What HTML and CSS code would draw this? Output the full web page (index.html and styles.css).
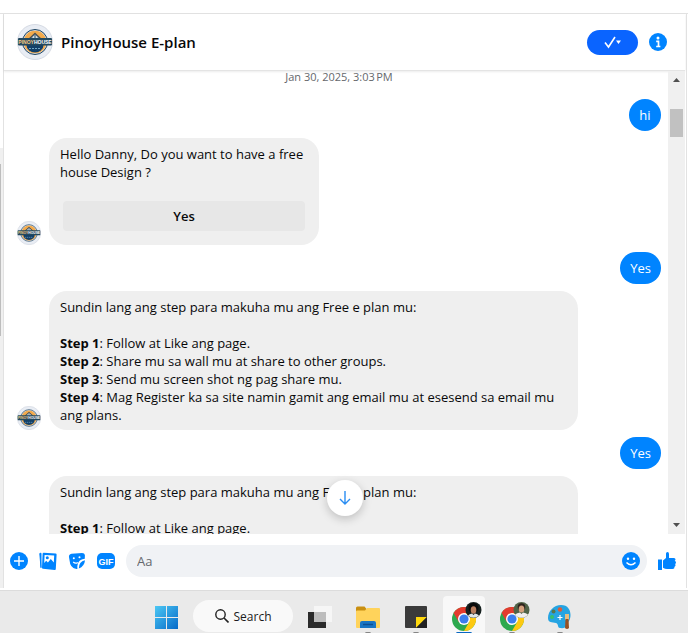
FILE: index.html
```html
<!DOCTYPE html>
<html lang="en">
<head>
    <meta charset="UTF-8">
    <meta name="viewport" content="width=device-width, initial-scale=1.0">
    <title>PinoyHouse E-plan</title>
    <link rel="stylesheet" href="styles.css">
</head>
<body>
    <!-- shared logo, used by every avatar -->
    <svg class="defs" width="0" height="0" aria-hidden="true">
        <symbol id="logo" viewBox="0 0 36 36">
            <circle cx="18" cy="18" r="17.5" fill="#e9edf4" stroke="#d5dae3"/>
            <circle cx="18" cy="18" r="12.5" fill="#d9dde2" stroke="#1d4462" stroke-width="1"/>
            <circle cx="18" cy="18" r="11.3" fill="#f3aa4b"/>
            <path d="M18 8.5 27 17v4H9v-4z" fill="#454f55"/>
            <path d="M18 10.5 24 16H12z" fill="#d9e3e8"/>
            <path d="M18 11v5M15 13.5v2.5M21 13.5v2.5" stroke="#294a60" stroke-width="1"/>
            <path d="M9.5 21h17a8.5 7.5 0 0 1-17 0z" fill="#123f68"/>
            <path d="M12 24.5h12" stroke="#6fa4c4" stroke-width="1" stroke-dasharray="2 1"/>
            <rect x="1" y="14" width="34" height="7.5" rx="1" fill="#23495f"/>
            <text x="18" y="19.7" text-anchor="middle" font-family="Liberation Sans" font-weight="700" font-size="5"><tspan fill="#f7c982">PINOY</tspan><tspan fill="#fff">HOUSE</tspan></text>
        </symbol>
        <symbol id="chrome" viewBox="0 0 24 24">
            <circle cx="12" cy="12" r="12" fill="#2da94f"/>
            <path d="M12 6h10.4A12 12 0 0 1 12 24l5.2-9z" fill="#fdc912"/>
            <path d="M12 6h10.4A12 12 0 0 0 1.6 6l5.2 9z" fill="#e33b2e"/>
            <circle cx="12" cy="12" r="6" fill="#fff"/>
            <circle cx="12" cy="12" r="4.6" fill="#3b7ded"/>
        </symbol>
    </svg>

    <div class="screen">
        <div class="side-edge"><div class="side-thumb"></div></div>

        <main class="chat">
            <header class="chat-header">
                <svg class="avatar-lg"><use href="#logo"/></svg>
                <h1>PinoyHouse E-plan</h1>
                <button class="done-btn" aria-label="Mark as done">
                    <svg width="20" height="14" viewBox="0 0 20 14"><path d="M2 7.5 5.5 12 12 2" fill="none" stroke="#fff" stroke-width="1.6"/><path d="M13 5.5h5L15.5 9z" fill="#fff"/></svg>
                </button>
                <button class="icon-btn" aria-label="Conversation information">
                    <svg width="18" height="18" viewBox="0 0 18 18"><circle cx="9" cy="9" r="9" fill="currentColor"/><circle cx="9" cy="5" r="1.5" fill="#fff"/><path d="M7.2 8.3h2.3v5M7.2 13.5h4.2" fill="none" stroke="#fff" stroke-width="1.7"/></svg>
                </button>
            </header>

            <section class="thread">
                <div class="messages">
                    <time class="date">Jan 30, 2025, 3:03&#8239;PM</time>

                    <div class="row sent"><p class="bubble">hi</p></div>

                    <div class="row received">
                        <svg class="avatar-sm"><use href="#logo"/></svg>
                        <div class="bubble card">
                            <p>Hello Danny, Do you want to have a free house Design ?</p>
                            <button class="reply-btn">Yes</button>
                        </div>
                    </div>

                    <div class="row sent"><p class="bubble">Yes</p></div>

                    <div class="row received">
                        <svg class="avatar-sm"><use href="#logo"/></svg>
                        <div class="bubble">
                            <p>Sundin lang ang step para makuha mu ang Free e plan mu:</p>
                            <br>
                            <p><b>Step 1</b>: Follow at Like ang page.</p>
                            <p><b>Step 2</b>: Share mu sa wall mu at share to other groups.</p>
                            <p><b>Step 3</b>: Send mu screen shot ng pag share mu.</p>
                            <p><b>Step 4</b>: Mag Register ka sa site namin gamit ang email mu at esesend sa email mu ang plans.</p>
                        </div>
                    </div>

                    <div class="row sent"><p class="bubble">Yes</p></div>

                    <div class="row received latest">
                        <div class="avatar-sm"></div>
                        <div class="bubble">
                            <p>Sundin lang ang step para makuha mu ang Free e plan mu:</p>
                            <br>
                            <p><b>Step 1</b>: Follow at Like ang page.</p>
                        </div>
                    </div>
                </div>

                <div class="scrollbar">
                    <svg width="7" height="4" viewBox="0 0 7 4"><path d="M0 4 3.5 0 7 4z" fill="#505050"/></svg>
                    <div class="scroll-thumb"></div>
                    <svg width="7" height="4" viewBox="0 0 7 4"><path d="M0 0 3.5 4 7 0z" fill="#505050"/></svg>
                </div>

                <button class="jump-btn" aria-label="Scroll to bottom">
                    <svg width="14" height="16" viewBox="0 0 14 16"><path d="M7 1v13M2 9l5 5 5-5" fill="none" stroke="#2a8df2" stroke-width="1.4"/></svg>
                </button>
            </section>

            <form class="composer">
                <button type="button" class="icon-btn" aria-label="More actions">
                    <svg width="18" height="18" viewBox="0 0 18 18"><circle cx="9" cy="9" r="9" fill="currentColor"/><path d="M9 4v10M4 9h10" stroke="#fff" stroke-width="1.4"/></svg>
                </button>
                <button type="button" class="icon-btn" aria-label="Attach a photo">
                    <svg width="18" height="18" viewBox="0 0 18 18"><path d="M.8 1.5 2 1.2v14.5z" fill="currentColor" stroke="currentColor" stroke-width="1"/><path d="M4.6.8 16.6 1.5q1 .1 1 1L16.8 17q-.1 1-1.1.9L4 16.8q-1-.1-1-1L3.6 1.7q.1-.9 1-.9z" fill="currentColor"/><path d="M5.6 3 15.2 3.6l-.4 7-3-3.6-2.9 3.5-1.7-1.7L5.2 11z" fill="#fff"/><circle cx="8.3" cy="5.8" r="1.5" fill="currentColor"/></svg>
                </button>
                <button type="button" class="icon-btn" aria-label="Choose a sticker">
                    <svg width="18" height="18" viewBox="0 0 18 18"><path d="M3.5 1.8 14 1q2.6 0 2.9 2l-.1 3.8q-4.9.4-6.7 4.2-1 2.4-.7 5.9-2.6.2-4-.8Q3 14.3 2.2 12L1 5.3Q.5 2.3 3.5 1.8z" fill="currentColor"/><path d="M17 8.2q-.5 6-6.2 8.3-.1-6.9 6.2-8.3z" fill="currentColor"/><circle cx="5.8" cy="6.2" r="1" fill="#fff"/><circle cx="11.5" cy="5.3" r="1" fill="#fff"/><path d="M5.2 10q2.3 2 4.6.4" fill="none" stroke="#fff" stroke-width="1.2"/></svg>
                </button>
                <button type="button" class="icon-btn" aria-label="Choose a GIF">
                    <svg width="18" height="18" viewBox="0 0 18 18"><rect y="1" width="18" height="16" rx="5" fill="currentColor"/><text x="9" y="12.5" text-anchor="middle" font-family="Liberation Sans" font-size="9" font-weight="700" fill="#fff">GIF</text></svg>
                </button>
                <div class="field">
                    <input type="text" placeholder="Aa" aria-label="Message">
                    <button type="button" class="icon-btn" aria-label="Choose an emoji">
                        <svg width="18" height="18" viewBox="0 0 18 18"><circle cx="9" cy="9" r="9" fill="currentColor"/><circle cx="6" cy="6.8" r="1.2" fill="#fff"/><circle cx="12" cy="6.8" r="1.2" fill="#fff"/><path d="M4.5 10.5q4.5 4.5 9 0" fill="none" stroke="#fff" stroke-width="1.5"/></svg>
                    </button>
                </div>
                <button type="button" class="icon-btn" aria-label="Send a like">
                    <svg width="18" height="18" viewBox="0 0 18 18"><path d="M0 7.5h4V18H0zM5 8.5 8 6V1.5Q8 0 9.5 0T11 2v4h5q1.5 0 1.500 1.500 0 1-.8 1.300 1.300.5 1.300 1.700T17 12q.8.5.5 1.500t-1 1.200q.3 2.300-2 2.300H9q-2 0-4-1.200z" fill="currentColor"/></svg>
                </button>
            </form>
        </main>
    </div>

    <footer class="taskbar">
        <button class="app" aria-label="Start">
            <svg width="23" height="23" viewBox="0 0 23 23"><defs><linearGradient id="win" gradientUnits="userSpaceOnUse" x1="0" y1="0" x2="23" y2="23"><stop offset="0" stop-color="#4cc8f4"/><stop offset="1" stop-color="#0669c8"/></linearGradient></defs><path d="M0 0h11v11H0zM12 0h11v11H12zM0 12h11v11H0zM12 12h11v11H12z" fill="url(#win)"/></svg>
        </button>
        <button class="search">
            <svg width="14" height="14" viewBox="0 0 14 14"><circle cx="5.5" cy="5.5" r="4.7" fill="none" stroke="#222" stroke-width="1.4"/><path d="m9 9 4.5 4.5" stroke="#222" stroke-width="1.6"/></svg>
            Search
        </button>
        <button class="app" aria-label="Task view">
            <svg width="24" height="24" viewBox="0 0 24 24"><rect y="7" width="18" height="16" fill="#2b2b2b"/><rect x="6" y="1" width="18" height="16" fill="#f6f6f6"/><rect x="6" y="7" width="12" height="10" fill="#bdbdbd"/></svg>
        </button>
        <button class="app open" aria-label="File Explorer">
            <svg width="24" height="24" viewBox="0 0 24 24"><path d="M0 3q0-1.500 1.500-1.500h7L10.500 4H24v8H0z" fill="#c98f10"/><path d="M1 5.500h8L11 3h12q1 0 1 1v18q0 1-1 1H1q-1 0-1-1V6.500q0-1 1-1z" fill="#ffd35b"/><path d="M4 23v-5q0-2 2-2h12q2 0 2 2v5z" fill="#1975c4"/><path d="M7 19.500h10" stroke="#0d4f91" stroke-width="1.5"/></svg>
        </button>
        <button class="app open" aria-label="Sticky Notes">
            <svg width="22" height="22" viewBox="0 0 22 22"><rect width="22" height="22" rx="1" fill="#3a3a3a"/><path d="M11 22V11h11z" fill="#ffd80c"/><path d="M11 22h11V11z" fill="#222"/></svg>
        </button>
        <button class="app open active" aria-label="Chrome, first profile">
            <svg width="36" height="30" viewBox="-6 0 36 30"><use href="#chrome" y="5" width="24" height="24"/><circle cx="21.5" cy="8" r="8" fill="#16201f"/><circle cx="21.5" cy="6" r="5" fill="#0a0a0a"/><ellipse cx="21.5" cy="8" rx="2.8" ry="3.8" fill="#b97f60"/><path d="M16 13.5q1.500-1.500 4-2l1.500 1.500 1.500-1.500q2.500.5 4 2a8 8 0 0 1-11 0z" fill="#dfe6e9"/></svg>
        </button>
        <button class="app open" aria-label="Chrome, second profile">
            <svg width="36" height="30" viewBox="-6 0 36 30"><use href="#chrome" y="5" width="24" height="24"/><circle cx="21.5" cy="8" r="8" fill="#506348"/><circle cx="21.5" cy="5" r="3.8" fill="#30241e"/><ellipse cx="21.5" cy="7" rx="2.8" ry="3.6" fill="#d5a17e"/><path d="M15 12.5q2-1.700 5-2l1.500 1.500 1.500-1.500q3 .3 5 2a8 8 0 0 1-13 0z" fill="#f1eeee"/></svg>
        </button>
        <button class="app open" aria-label="Paint">
            <svg width="24" height="24" viewBox="0 0 24 24"><path d="M13 0c7 0 9.500 5 9.500 10 0 6-3 6.500-3.500 10-1 3-4 3.500-7 3-3-.5-1-4-4-5-4-1-8 0-8-5C0 6 6 0 13 0z" fill="#26a4e2"/><circle cx="4" cy="12" r="2" fill="#3ac06a"/><circle cx="5.5" cy="6.5" r="2" fill="#57764b"/><circle cx="12" cy="4.5" r="2.2" fill="#e05b37"/><path d="M12 10v5M9.500 12.500h5" stroke="#fff" stroke-width="1.2"/><path d="M17 9h4v6h-4z" fill="#e7bd83"/><path d="M17.500 14h3l.5 9q-2 2-4 0z" fill="#975023"/></svg>
        </button>
    </footer>
</body>
</html>
```
FILE: styles.css
```css
* {
    margin: 0;
    padding: 0;
    box-sizing: border-box;
}

body {
    height: 100vh;
    display: flex;
    flex-direction: column;
    overflow: hidden;
    background: #fff;
    color: #080809;
    font-family: 'Open Sans', 'Noto Sans', sans-serif;
    font-size: 13px;
    line-height: 18px;
}

button {
    border: none;
    background: none;
    font-family: inherit;
    cursor: pointer;
}

svg {
    display: block;
    flex: none;
}

.defs {
    position: absolute;
}

/* window */
.screen {
    flex: 1;
    min-height: 0;
    display: flex;
    margin: 13px 0 2px;
    border-top: 1px solid #e2e2e2;
}

.side-edge {
    width: 3px;
    margin-top: 134px;
    padding-top: 16px;
    background: #f0f0f0;
}

.side-thumb {
    width: 1px;
    height: 172px;
    background: #bdbdbd;
}

.chat {
    flex: 1;
    min-width: 0;
    display: flex;
    flex-direction: column;
    margin-right: 1px;
    padding-right: 1px;
    border: 1px solid #e2e2e2;
    border-top: none;
    border-bottom: none;
}

.chat-header {
    flex: none;
    display: flex;
    align-items: center;
    height: 57px;
    padding: 0 18px 0 13px;
    border-bottom: 1px solid #e4e4e4;
    box-shadow: 0 1px 2px rgba(0, 0, 0, 0.08);
}

.avatar-lg {
    width: 36px;
    height: 36px;
    margin-right: 8px;
}

h1 {
    flex: 1;
    font-size: 15px;
    font-weight: 600;
}

.done-btn {
    display: flex;
    align-items: center;
    justify-content: center;
    width: 51px;
    height: 25px;
    margin-right: 11px;
    border-radius: 13px;
    background: #0a64ff;
}

.icon-btn {
    flex: none;
    color: #0084ff;
}

/* messages */
.thread {
    position: relative;
    flex: 1;
    min-height: 0;
    display: flex;
}

.messages {
    flex: 1;
    display: flex;
    flex-direction: column;
    gap: 7px;
    overflow: hidden;
    padding: 1px 7px 0 13px;
}

.date {
    flex: none;
    height: 20px;
    font-size: 11px;
    line-height: 10px;
    text-align: center;
    color: #65686c;
}

.row {
    flex: none;
    display: flex;
    align-items: flex-end;
}

.sent {
    justify-content: flex-end;
}

.received {
    gap: 8px;
    padding-right: 83px;
}

.avatar-sm {
    flex: none;
    width: 24px;
    height: 24px;
}

.bubble {
    padding: 7px 11px 6px;
    border-radius: 18px;
    background: #efefef;
}

.sent .bubble {
    min-width: 32px;
    padding: 7px 10px;
    background: #0084ff;
    color: #fff;
    text-align: center;
}

.received .bubble {
    flex: 1;
}

.received .card {
    flex: 0 1 270px;
}

/* runs on below the fold */
.latest .bubble {
    padding-bottom: 60px;
}

.reply-btn {
    display: block;
    width: 242px;
    max-width: 100%;
    height: 30px;
    margin: 20px auto 8px;
    border-radius: 4px;
    background: #e7e7e7;
    color: #080809;
    font-size: 13px;
    font-weight: 600;
}

.scrollbar {
    flex: none;
    display: flex;
    flex-direction: column;
    align-items: center;
    width: 17px;
    padding: 7px 0;
    background: #f0f0f0;
}

.scroll-thumb {
    width: 13px;
    height: 28px;
    margin: 27px 0 auto;
    background: #c1c1c1;
}

.jump-btn {
    position: absolute;
    bottom: 18px;
    left: calc(50% - 18px);
    display: flex;
    align-items: center;
    justify-content: center;
    width: 36px;
    height: 36px;
    border-radius: 50%;
    background: #fff;
    box-shadow: 0 3px 10px rgba(0, 0, 0, 0.2);
}

/* composer */
.composer {
    flex: none;
    display: flex;
    align-items: center;
    gap: 11px;
    height: 54px;
    padding: 0 9px 0 6px;
}

.field {
    flex: 1;
    display: flex;
    align-items: center;
    height: 32px;
    padding: 0 7px 0 11px;
    border-radius: 16px;
    background: #f0f2f5;
}

.field input {
    flex: 1;
    min-width: 0;
    border: none;
    outline: none;
    background: none;
    font-family: inherit;
    font-size: 13px;
}

.field input::placeholder {
    color: #65686c;
}

/* taskbar */
.taskbar {
    flex: none;
    display: flex;
    gap: 6px;
    height: 43px;
    padding: 5px 0 0 145px;
    border-top: 1px solid #dcdcdc;
    background: #eaeaea;
}

.app {
    position: relative;
    display: flex;
    align-items: center;
    justify-content: center;
    width: 42px;
    height: 42px;
    border-radius: 4px;
}

.active {
    background: #f8f8f8;
}

.open::after {
    content: "";
    position: absolute;
    bottom: 3px;
    width: 6px;
    height: 3px;
    border-radius: 2px;
    background: #858585;
}

.active::after {
    width: 16px;
    background: #0867c2;
}

.search {
    display: flex;
    align-items: center;
    justify-content: center;
    gap: 5px;
    width: 100px;
    height: 32px;
    margin-top: 4px;
    border-radius: 16px;
    background: #f9f9f9;
    color: #1b1b1b;
    font-size: 12px;
}
```
